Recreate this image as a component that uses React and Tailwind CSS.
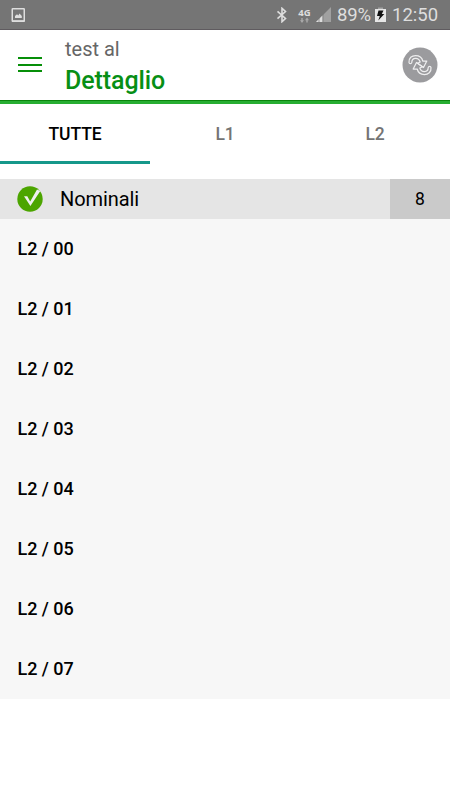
import React, { useState } from 'react';

const tabs = ['TUTTE', 'L1', 'L2'];
const lamps = ['00', '01', '02', '03', '04', '05', '06', '07'];

const StatusBar = () => (
  <div className="flex h-[30px] items-center border-b border-[#5f5b5f] bg-[#757575] pl-[11px] pr-[11px] text-[#dedede]">
    <svg className="h-4 w-4" viewBox="0 0 16 16">
      <rect x="1.25" y="1.75" width="12" height="12.5" rx="0.5" fill="none" stroke="#dedede" strokeWidth="1.5" />
      <path d="M1 13.2h12.500v1.8H1zM4 11V9l2-1.8 1.3 1.3L8.500 6.5 10.800 9v2z" fill="#dedede" />
    </svg>

    <div className="ml-auto flex items-center pt-px">
      {/* Bluetooth */}
      <svg className="mr-[10px] h-4 w-3" viewBox="0 0 12 16">
        <path d="M1.5 4.3l8 7.2L6 14.7V1.3l3.5 3.2-8 7.2" fill="none" stroke="#dedede" strokeWidth="1.6" />
      </svg>
      {/* Network type with data arrows */}
      <div className="mr-[5px] flex w-[13px] flex-col items-center">
        <span className="font-['Open_Sans',sans-serif] text-[9.500px] font-bold leading-[9px]">4G</span>
        <svg className="h-[6px] w-[9px]" viewBox="0 0 9 6">
          <path d="M2 6L0 3.3h1.3V1h1.4v2.3H4zM7 .5l2 2.7H7.700V5.500H6.300V3.200H5z" fill="#aaa" />
        </svg>
      </div>
      {/* Signal strength */}
      <svg className="mr-[6px] h-4 w-[15px]" viewBox="0 0 15 16">
        <path d="M0 15L15 0v15z" fill="#a0a0a0" />
        <path d="M0 15L6.500 8.500V15z" fill="#dedede" />
        <path d="M3 9v6M7 5v10" stroke="#757575" strokeWidth="0.7" />
      </svg>
      <span className="w-[34px] whitespace-nowrap text-[18.500px] leading-[22px] tracking-[-0.1px]">89%</span>
      {/* Charging battery */}
      <svg className="ml-[4px] mr-[6px] h-[16px] w-[11px]" viewBox="0 0 11 16">
        <path d="M0 2h11v13H0z" fill="#e6e6e6" />
        <path d="M3 .5h5V2H3z" fill="#a5a5a5" />
        <path d="M3.500 3.500h5L6.800 7H9.300L3.300 13.500 4.800 9H2z" fill="#111" />
      </svg>
      <span className="w-[47px] whitespace-nowrap text-[18.500px] leading-[22px]">12:50</span>
    </div>
  </div>
);

const syncArrow =
  'M7 15.5C6.500 10.800 10 8.500 13.500 8.500C17 8.500 20 10.500 20.800 14H24.800L21.500 20.500L15.500 16.300L18.200 15C17.300 12.500 15.500 11.300 13.500 11.400C11 11.500 9.800 13 9.800 15.500C9.500 17 7.200 17 7 15.500Z';

const SyncIcon = () => (
  <svg className="h-[36px] w-[36px]" viewBox="0 0 36 36">
    <circle cx="18" cy="18" r="17.500" fill="#9b9b9e" />
    <g fill="none" stroke="#eeeeef" strokeWidth="1.250" strokeLinejoin="round">
      <path d={syncArrow} />
      <path d={syncArrow} transform="rotate(180 18 18)" />
    </g>
  </svg>
);

const Header = () => (
  <header className="flex h-[74px] items-start border-t-0 border-b-[3px] border-[#27ae32] bg-white shadow-[inset_0_-1px_0_#0b850d]">
    <button className="ml-[18px] mt-[27px] flex w-6 flex-col gap-[4.500px]" aria-label="Menu">
      <span className="h-[2px] w-full bg-[#078f09]" />
      <span className="h-[2px] w-full bg-[#078f09]" />
      <span className="h-[2px] w-full bg-[#078f09]" />
    </button>
    <div className="ml-[23px] pt-[6px]">
      <div className="text-[20px] leading-[26px] text-[#666]">test al</div>
      <h1 className="mt-[4px] text-[25px] font-medium leading-[30px] tracking-[-0.08px] text-[#078f15]">Dettaglio</h1>
    </div>
    <button className="ml-auto mr-[12px] mt-[17px]" aria-label="Sync">
      <SyncIcon />
    </button>
  </header>
);

const App = () => {
  const [activeTab, setActiveTab] = useState('TUTTE');

  return (
    <div className="min-h-screen w-full overflow-hidden bg-white font-[Roboto,sans-serif]">
      <StatusBar />
      <Header />

      <nav className="flex h-[60px]">
        {tabs.map((tab) => (
          <button
            key={tab}
            onClick={() => setActiveTab(tab)}
            className={`flex-1 border-b-[3px] pt-[4px] text-[17.500px] font-medium tracking-[-0.1px] ${
              activeTab === tab ? 'border-[#16988a] text-black' : 'border-transparent text-[#747474]'
            }`}
          >
            {tab}
          </button>
        ))}
      </nav>

      {/* Group heading with its count */}
      <div className="mt-[15px] flex h-10 items-center bg-[#e5e5e5]">
        <svg className="ml-[17px] h-[26px] w-[26px]" viewBox="0 0 26 26">
          <circle cx="13" cy="13" r="12.700" fill="#4ca500" />
          <path d="M7 10.200h3.300l2.900 5.300L20 3.500l3.300 1.500L13.400 20z" fill="#f0f0f0" />
        </svg>
        <span className="ml-[17px] text-[20px] tracking-[-0.08px] text-black">Nominali</span>
        <span className="ml-auto flex h-full w-[60px] items-center justify-center bg-[#cacaca] pt-px text-[17.500px] text-black">
          {lamps.length}
        </span>
      </div>

      <ul className="bg-[#f7f7f7]">
        {lamps.map((id) => (
          <li key={id} className="flex h-[60px] items-center pl-[17.500px] text-[18px] font-medium leading-[26px] tracking-[-0.04px] text-black">
            L2 / {id}
          </li>
        ))}
      </ul>
    </div>
  );
};

export default App;
